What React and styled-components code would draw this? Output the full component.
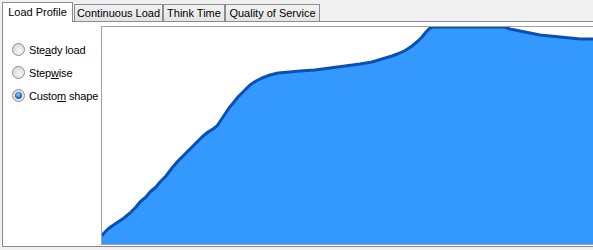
import React from "react";
import styled, { createGlobalStyle } from "styled-components";

const GlobalStyle = createGlobalStyle`
  html, body {
    margin: 0;
    padding: 0;
    background: #f0f0f0;
  }
  body {
    font-family: "Liberation Sans", Arial, sans-serif;
    font-size: 11px;
    color: #000;
  }
`;

const Window = styled.div`
  width: 593px;
  height: 250px;
  overflow: hidden;
  background: #f0f0f0;
`;

const TabStrip = styled.div`
  display: flex;
  align-items: flex-end;
  height: 21px;
  padding-left: 2px;
`;

const Tab = styled.div`
  box-sizing: border-box;
  width: ${(p) => p.$w}px;
  margin-left: ${(p) => p.$ml || 0}px;
  display: flex;
  align-items: center;
  justify-content: center;
  border: 1px solid #898c95;
  border-bottom: none;
  white-space: nowrap;
  ${(p) =>
    p.$active
      ? `
    height: 20px;
    margin-bottom: -1px;
    background: #fff;
    position: relative;
    z-index: 1;
    padding-bottom: 2px;
  `
      : `
    height: 17px;
    background: linear-gradient(#f2f2f2, #e4e4e4);
  `}
`;

const Panel = styled.div`
  box-sizing: border-box;
  margin-left: 2px;
  height: 226px;
  background: #fff;
  border: 1px solid #898c95;
  border-right: none;
  display: flex;
  padding: 4px 0 1px 0;
`;

const Options = styled.div`
  width: 98px;
  display: flex;
  flex-direction: column;
  padding: 12px 0 0 9px;
  box-sizing: border-box;
`;

const OptionRow = styled.label`
  display: flex;
  align-items: center;
  height: 23px;
  gap: 4px;
  white-space: nowrap;
  letter-spacing: -0.15px;
`;

const RadioDot = styled.span`
  box-sizing: border-box;
  width: 13px;
  height: 13px;
  border-radius: 50%;
  border: 1px solid #8e8f8f;
  background: radial-gradient(circle at 60% 65%, #f4f4f4 0%, #e2e2e2 55%, #cfcfcf 100%);
  display: flex;
  align-items: center;
  justify-content: center;
  &::after {
    content: "";
    display: ${(p) => (p.$checked ? "block" : "none")};
    width: 7px;
    height: 7px;
    border-radius: 50%;
    background: radial-gradient(circle at 45% 40%, #9ad0ff 0%, #2a7fd4 45%, #0c3f87 100%);
  }
`;

const ChartBox = styled.div`
  flex: 1;
  border: 1px solid #a0a0a0;
  border-right: none;
  overflow: hidden;
  display: flex;
  svg {
    display: block;
    width: 100%;
    height: 100%;
  }
`;

const curve = [
  [102, 236], [104, 233], [108, 229], [112, 226], [118, 222], [124, 218],
  [130, 213], [136, 207], [140, 202], [146, 197], [150, 192], [156, 187],
  [160, 182], [166, 176], [172, 168], [178, 161], [184, 155], [190, 149],
  [196, 143], [202, 137], [208, 132], [213, 129], [217, 126], [221, 120],
  [225, 114], [229, 108], [234, 102], [238, 97], [244, 91], [250, 85],
  [256, 81], [262, 78], [270, 75], [278, 73], [290, 72], [300, 71],
  [315, 70], [330, 68], [345, 66], [360, 64], [372, 62], [382, 59],
  [392, 56], [400, 53], [406, 50], [412, 46], [418, 41], [422, 37],
  [426, 32], [430, 28], [433, 27], [505, 27], [510, 29], [520, 31],
  [530, 33], [540, 35], [550, 36], [560, 37], [570, 38], [580, 39],
  [594, 39],
];

const linePts = curve.map((p) => p.join(",")).join(" ");
const fillPts = linePts + " 594,244 102,244";

function LoadChart() {
  return (
    <ChartBox>
      <svg viewBox="102 27 491 217" preserveAspectRatio="none">
        <polygon points={fillPts} fill="#3399ff" />
        <polyline
          points={linePts}
          fill="none"
          stroke="#0a4fb4"
          strokeWidth="3"
          strokeLinejoin="round"
        />
      </svg>
    </ChartBox>
  );
}

export default function App() {
  return (
    <Window>
      <GlobalStyle />
      <TabStrip>
        <Tab $active $w={71}>Load Profile</Tab>
        <Tab $w={89} $ml={1}>Continuous Load</Tab>
        <Tab $w={62}>Think Time</Tab>
        <Tab $w={95}>Quality of Service</Tab>
      </TabStrip>
      <Panel>
        <Options>
          <OptionRow>
            <RadioDot />
            <span>Ste<u>a</u>dy load</span>
          </OptionRow>
          <OptionRow>
            <RadioDot />
            <span>Step<u>w</u>ise</span>
          </OptionRow>
          <OptionRow>
            <RadioDot $checked />
            <span>Custo<u>m</u> shape</span>
          </OptionRow>
        </Options>
        <LoadChart />
      </Panel>
    </Window>
  );
}
